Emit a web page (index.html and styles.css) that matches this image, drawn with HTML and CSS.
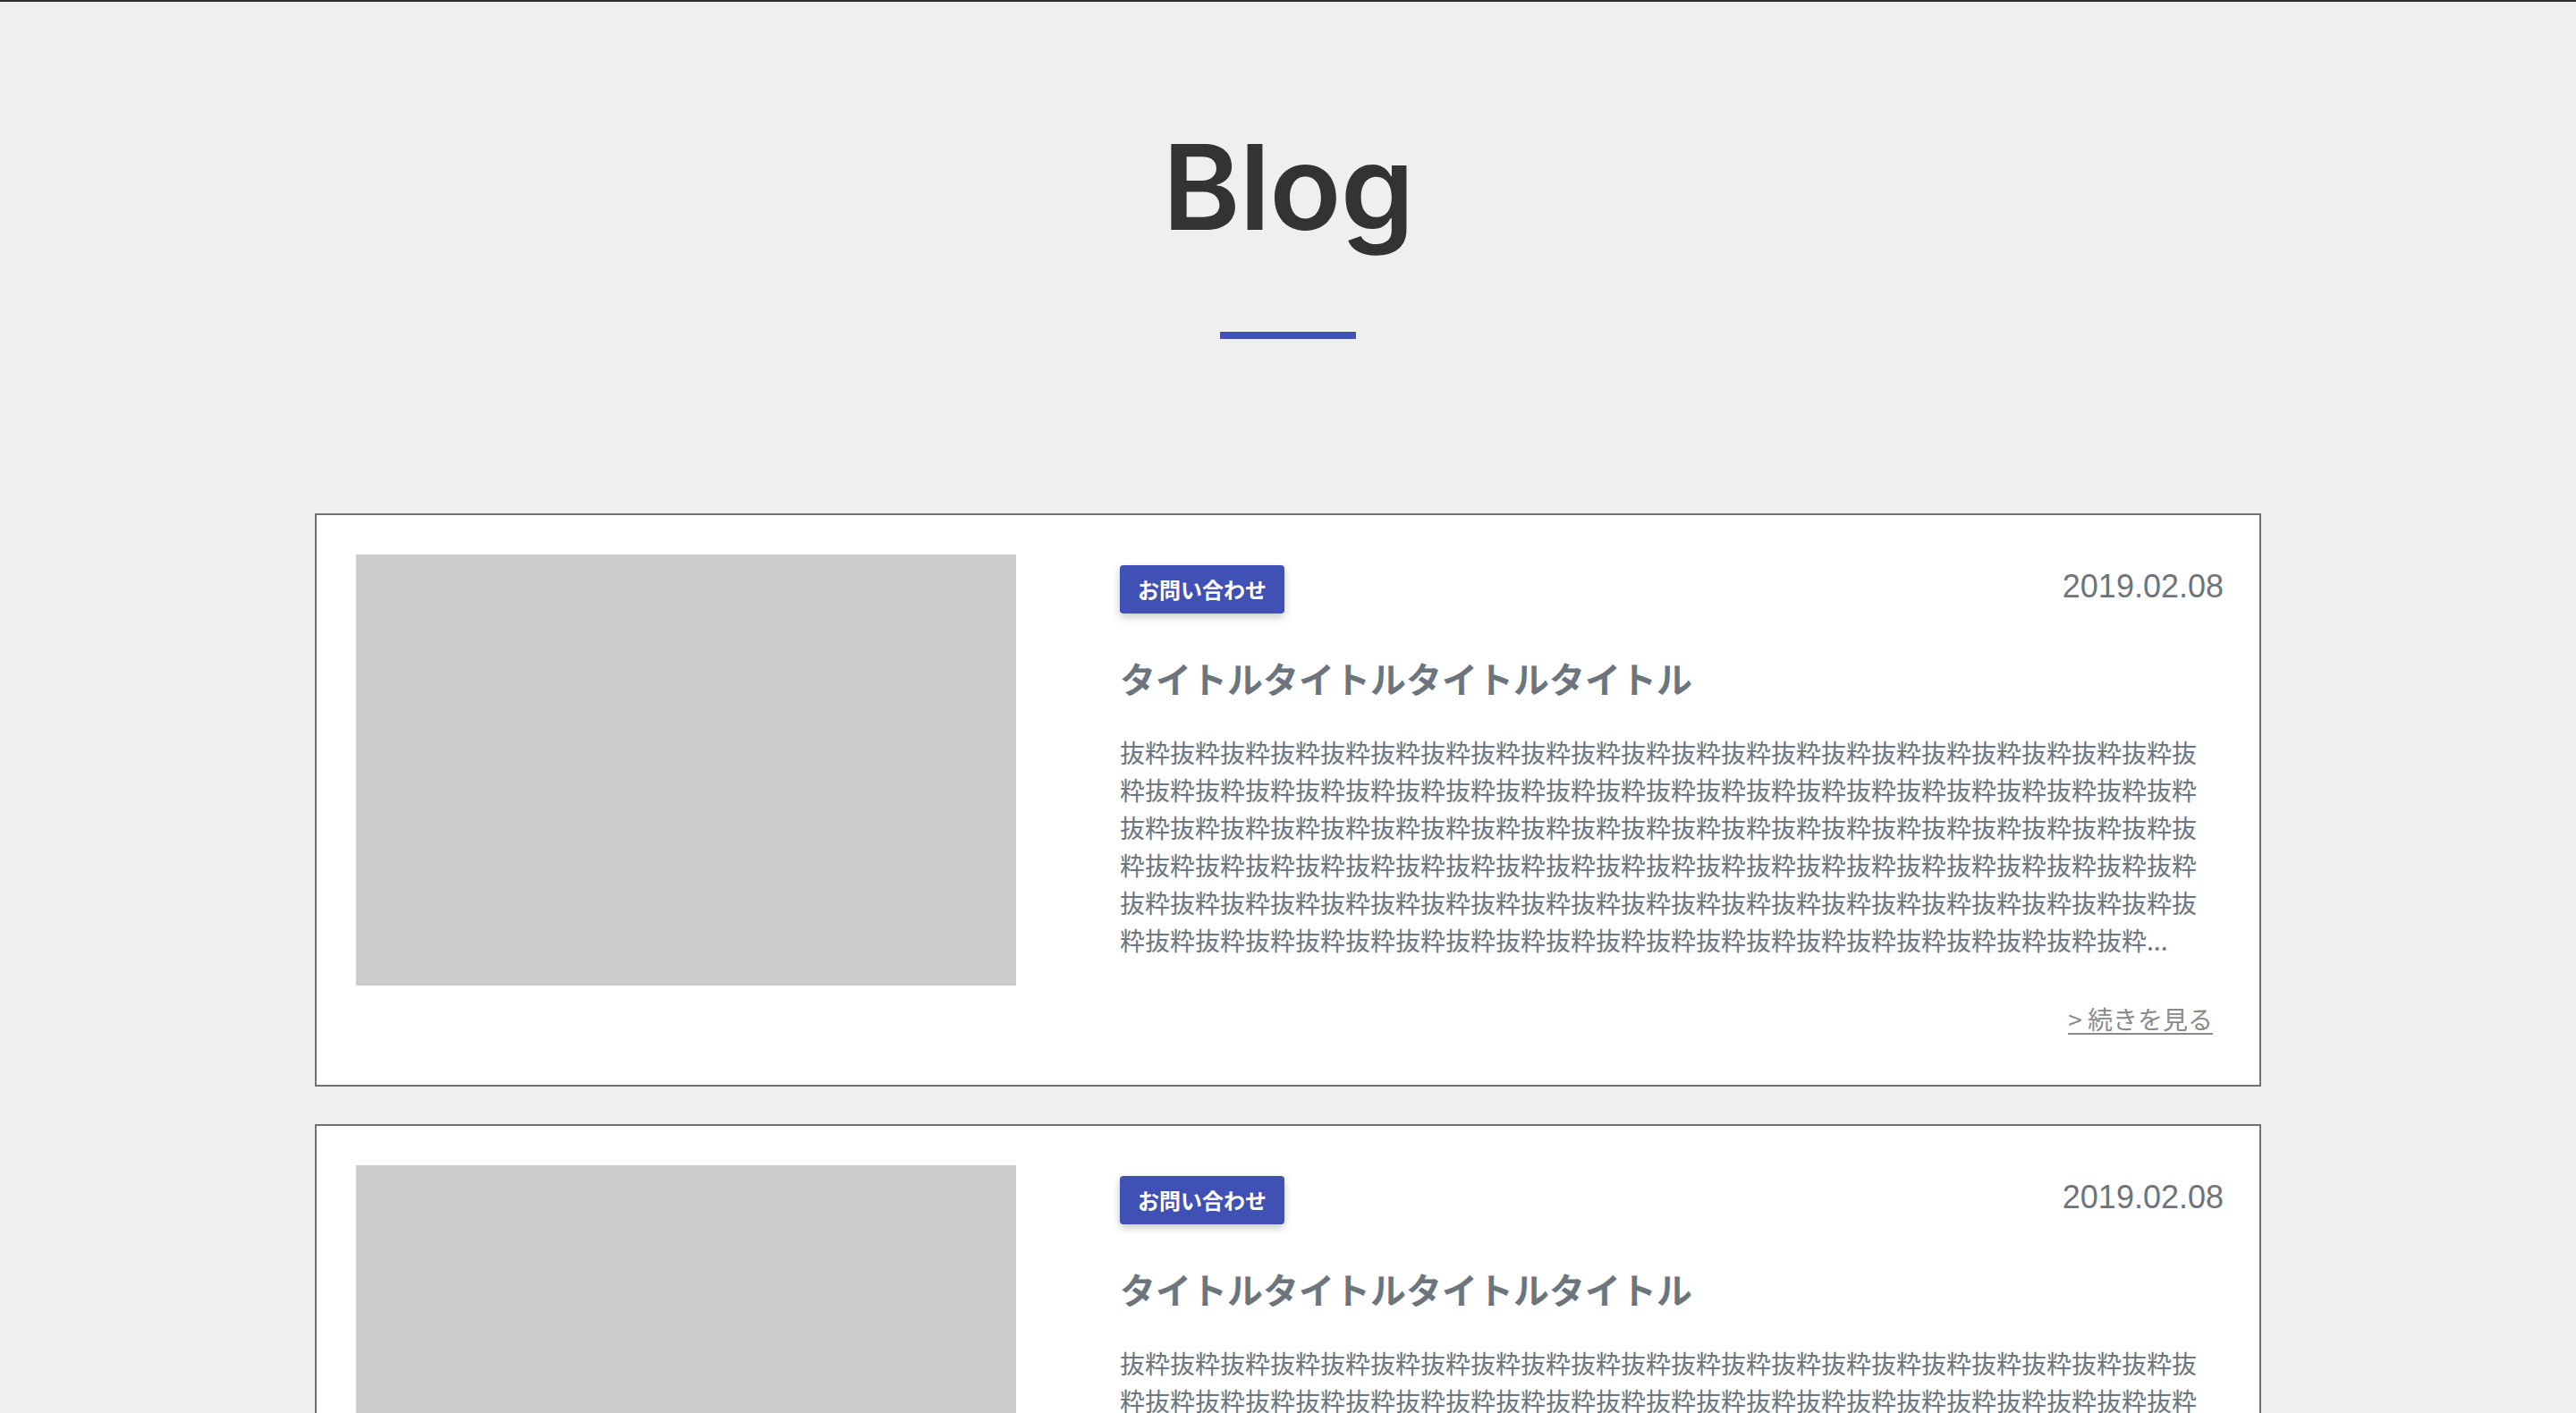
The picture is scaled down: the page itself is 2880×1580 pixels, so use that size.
FILE: index.html
```html
<!DOCTYPE html>
<html lang="ja">
<head>
<meta charset="utf-8">
<title>Blog</title>
<link rel="stylesheet" href="styles.css">
</head>
<body>
<div class="topbar"></div>
<header class="page-head">
  <h1 class="page-title">Blog</h1>
  <div class="title-bar"></div>
</header>
<main class="list">
  <article class="card">
    <div class="thumb"></div>
    <div class="info">
      <div class="meta">
        <span class="badge">お問い合わせ</span>
        <span class="date">2019.02.08</span>
      </div>
      <h2 class="post-title">タイトルタイトルタイトルタイトル</h2>
      <p class="excerpt">抜粋抜粋抜粋抜粋<!---->抜粋抜粋抜粋抜粋<!---->抜粋抜粋抜粋抜粋<!---->抜粋抜粋抜粋抜粋<!--
-->抜粋抜粋抜粋抜粋<!---->抜粋抜粋抜粋抜粋<!---->抜粋抜粋抜粋抜粋<!---->抜粋抜粋抜粋抜粋<!--
-->抜粋抜粋抜粋抜粋<!---->抜粋抜粋抜粋抜粋<!---->抜粋抜粋抜粋抜粋<!---->抜粋抜粋抜粋抜粋<!--
-->抜粋抜粋抜粋抜粋<!---->抜粋抜粋抜粋抜粋<!---->抜粋抜粋抜粋抜粋<!---->抜粋抜粋抜粋抜粋<!--
-->抜粋抜粋抜粋抜粋<!---->抜粋抜粋抜粋抜粋<!---->抜粋抜粋抜粋抜粋<!---->抜粋抜粋抜粋抜粋<!--
-->抜粋抜粋抜粋抜粋<!---->抜粋抜粋抜粋抜粋<!---->抜粋抜粋抜粋抜粋<!---->抜粋抜粋抜粋抜粋<!--
-->抜粋抜粋抜粋抜粋<!---->抜粋抜粋抜粋抜粋<!---->抜粋抜粋抜粋抜粋<!---->抜粋抜粋抜粋抜粋<!--
-->抜粋抜粋抜粋抜粋<!---->抜粋抜粋抜粋抜粋<!---->抜粋抜粋抜粋抜粋<!---->抜粋抜粋抜粋抜粋...</p>
      <div class="more-row"><a class="more" href="#">&gt; 続きを見る</a></div>
    </div>
  </article>
  <article class="card">
    <div class="thumb"></div>
    <div class="info">
      <div class="meta">
        <span class="badge">お問い合わせ</span>
        <span class="date">2019.02.08</span>
      </div>
      <h2 class="post-title">タイトルタイトルタイトルタイトル</h2>
      <p class="excerpt">抜粋抜粋抜粋抜粋<!---->抜粋抜粋抜粋抜粋<!---->抜粋抜粋抜粋抜粋<!---->抜粋抜粋抜粋抜粋<!--
-->抜粋抜粋抜粋抜粋<!---->抜粋抜粋抜粋抜粋<!---->抜粋抜粋抜粋抜粋<!---->抜粋抜粋抜粋抜粋<!--
-->抜粋抜粋抜粋抜粋<!---->抜粋抜粋抜粋抜粋<!---->抜粋抜粋抜粋抜粋<!---->抜粋抜粋抜粋抜粋<!--
-->抜粋抜粋抜粋抜粋<!---->抜粋抜粋抜粋抜粋<!---->抜粋抜粋抜粋抜粋<!---->抜粋抜粋抜粋抜粋<!--
-->抜粋抜粋抜粋抜粋<!---->抜粋抜粋抜粋抜粋<!---->抜粋抜粋抜粋抜粋<!---->抜粋抜粋抜粋抜粋<!--
-->抜粋抜粋抜粋抜粋<!---->抜粋抜粋抜粋抜粋<!---->抜粋抜粋抜粋抜粋<!---->抜粋抜粋抜粋抜粋<!--
-->抜粋抜粋抜粋抜粋<!---->抜粋抜粋抜粋抜粋<!---->抜粋抜粋抜粋抜粋<!---->抜粋抜粋抜粋抜粋<!--
-->抜粋抜粋抜粋抜粋<!---->抜粋抜粋抜粋抜粋<!---->抜粋抜粋抜粋抜粋<!---->抜粋抜粋抜粋抜粋...</p>
      <div class="more-row"><a class="more" href="#">&gt; 続きを見る</a></div>
    </div>
  </article>
</main>
</body>
</html>
```

FILE: styles.css
```css
html, body {
  margin: 0;
  padding: 0;
}

body {
  background: #efefef;
  font-family: "Noto Sans CJK JP", "Noto Sans", sans-serif;
  color: #333;
}

.topbar {
  height: 2px;
  background: #2b2b2b;
}

.page-head {
  display: flex;
  flex-direction: column;
  align-items: center;
  padding-top: 141px;
}

.page-title {
  margin: 0;
  font-family: "Inter", "Liberation Sans", sans-serif;
  font-weight: 600;
  font-size: 132px;
  line-height: 132px;
  letter-spacing: -1px;
  color: #333333;
}

.title-bar {
  margin-top: 96px;
  width: 152px;
  height: 8px;
  background: #3f51b5;
}

.list {
  width: 2176px;
  margin: 195px auto 0;
  display: flex;
  flex-direction: column;
  gap: 42px;
}

.card {
  display: flex;
  gap: 116px;
  background: #fff;
  border: 2px solid #707070;
  padding: 44px 40px 44px 44px;
}

.thumb {
  flex: 0 0 738px;
  height: 482px;
  background: #cccccc;
}

.info {
  flex: 1;
  min-width: 0;
  padding-top: 12px;
  padding-bottom: 9px;
}

.meta {
  display: flex;
  justify-content: space-between;
  align-items: flex-start;
}

.badge {
  display: inline-block;
  height: 54px;
  line-height: 54px;
  padding: 0 20px;
  background: #3f51b5;
  color: #fff;
  font-weight: 700;
  font-size: 24px;
  border-radius: 4px;
  box-shadow: 0 4px 10px rgba(0, 0, 0, 0.22);
}

.date {
  margin-top: 3px;
  font-family: "Liberation Sans", "Noto Sans", sans-serif;
  font-size: 36px;
  line-height: 41px;
  color: #6c757d;
}

.post-title {
  margin: 39px 0 0;
  font-size: 40px;
  line-height: 66px;
  font-weight: 700;
  color: #6c757d;
}

.excerpt {
  margin: 29px 0 0;
  padding-right: 20px;
  font-size: 28px;
  line-height: 42px;
  color: #6c757d;
  word-break: break-all;
}

.more-row {
  margin-top: 46px;
  padding-right: 12px;
  text-align: right;
  font-size: 28px;
  line-height: 42px;
}

.more {
  color: #8a8a8a;
  text-decoration: underline;
  text-underline-offset: 4px;
}
```
